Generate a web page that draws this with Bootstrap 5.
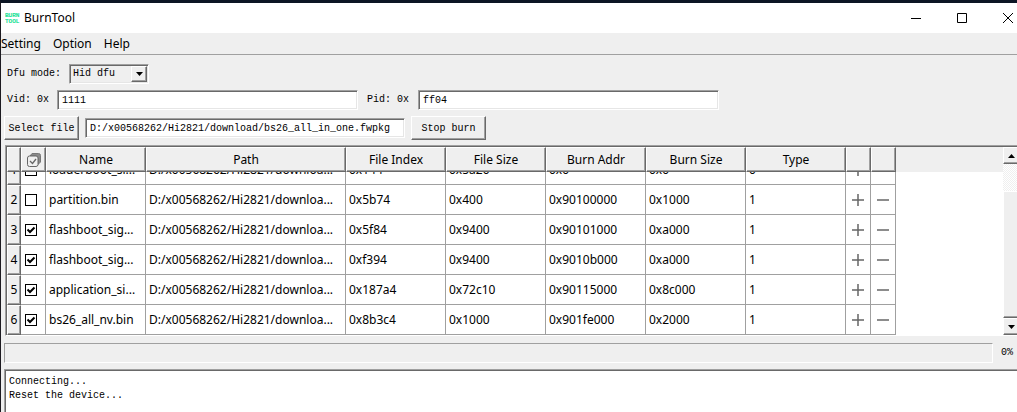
<!DOCTYPE html>
<html lang="en">
<head>
<meta charset="utf-8">
<meta name="viewport" content="width=device-width, initial-scale=1">
<title>BurnTool</title>
<link href="https://cdn.jsdelivr.net/npm/bootstrap@5.3.0/dist/css/bootstrap.min.css" rel="stylesheet">
<style>
:root { --face:#efefef; --mid:#a0a0a0; --dark:#696969; }
body { font:12px/16px "Noto Sans","Open Sans",sans-serif; color:#000; background:var(--face); }
.app { border-top:3px solid #0c1624; border-left:1px solid #1c1a20; }
.titlebar { height:30px; overflow:hidden; }
.win-btn { width:46px; height:30px; flex:none; }
.win-btn:last-child { margin-right:-14px; }
.win-btn, .row-btn { border:0; background:none; padding:0; color:#000; }
.menubar { height:22px; border-bottom:1px solid var(--mid); }
.menubar a { color:#000; text-decoration:none; }
.mono { font-family:"Liberation Mono",monospace; font-size:10px; line-height:14px; }
.sunken { border:1px solid; border-color:var(--mid) #fff #fff var(--mid); box-shadow:inset 1px 1px 0 var(--dark), inset -1px -1px 0 #e6e6e6; background:#fff; border-radius:0; color:#000; }
.raised { border:1px solid; border-color:#fff var(--dark) var(--dark) #fff; box-shadow:inset -1px -1px 0 var(--mid); background:var(--face); border-radius:0; color:#000; }
.tool-form { padding:9px 0 0 3px; gap:6px; }
.form-line { padding-left:3px; }
.file-line { gap:6px; }
.field { height:20px; padding:0 4px; outline:0; }
.field-id { width:301px; }
.field-file { width:320px; }
.pid-label { margin:0 9px; }
.combo { position:relative; width:80px; }
.combo select { display:block; width:100%; height:20px; padding:0 3px; appearance:none; background:var(--face); }
.combo-arrow { position:absolute; right:2px; top:2px; width:16px; height:16px; pointer-events:none; }
.tool-btn { height:24px; width:75px; padding:2px 0 0; }
.panes { padding:5px 0 0 3px; }
.grid-frame { margin-left:1px; border:solid var(--mid); border-width:1px 0 0 1px; box-shadow:inset 1px 1px 0 var(--dark); padding:1px 0 0 1px; background:#fff; border-bottom:1px solid #fff; }
.grid-scroll { height:188px; overflow:hidden; }
.grid { border-collapse:separate; border-spacing:0; table-layout:fixed; width:889px; }
.grid thead { position:sticky; top:0; z-index:1; }
.grid thead tr { background:var(--face); }
.grid thead th { height:25px; padding:0; font-weight:400; text-align:center; }
.grid td { height:30px; padding:0 3px; border:solid var(--mid); border-width:0 1px 1px 0; white-space:nowrap; overflow:hidden; }
.grid tbody th { padding:0; font-weight:400; text-align:center; }
.grid .tick-cell { padding:0 4px; }
.header-fill { box-shadow:inset 0 25px 0 var(--face); }
.tick { appearance:none; display:block; width:12px; height:12px; margin:0; border:1px solid #000; background:#fff; }
.tick:checked { background:#fff url("data:image/svg+xml,%3Csvg xmlns='http://www.w3.org/2000/svg' viewBox='0 0 10 10'%3E%3Cpath d='M1.500 4.500 4 7 8.500 2.500' fill='none' stroke='black' stroke-width='2'/%3E%3C/svg%3E"); }
.row-btn { display:block; width:16px; height:16px; margin:0 auto; }
.row-btn svg, .win-btn svg, .select-all svg, .combo-arrow svg { display:block; margin:auto; }
.vbar { width:14px; background:repeating-conic-gradient(#fff 0 25%, var(--face) 0 50%) 0 0/2px 2px; overflow:hidden; }
.vbar-btn { width:16px; height:17px; padding:0; flex:none; }
.vbar-btn svg { display:block; margin:auto; }
.vbar-gap { height:27px; }
.vbar-thumb { width:16px; }
.progress-line { margin:7px 0 6px; }
.burn-progress { height:20px; border:1px solid; border-color:var(--mid) #fff #fff var(--mid); background:var(--face); border-radius:0; }
.log { display:block; width:100%; height:calc(100vh - 369px); min-height:43px; border:solid var(--mid); border-width:1px 0 0 1px; box-shadow:inset 1px 1px 0 var(--dark); padding:5px 4px; resize:none; outline:0; background:#fff; overflow:hidden; }
</style>
</head>
<body class="overflow-hidden">
<div class="app">
  <header class="titlebar bg-white d-flex align-items-center">
    <svg class="ms-1" width="19" height="16" viewBox="0 0 19 16" aria-hidden="true"><g fill="#00e08a" stroke="#00e08a" stroke-width=".2" font-family="Liberation Mono" font-size="6"><text x="0" y="7">BURN</text><text x="0" y="13">TOOL</text></g></svg>
    <span class="me-auto">BurnTool</span>
    <button class="win-btn" aria-label="Minimize"><svg width="10" height="10"><path d="M0 5.500h10" stroke="#000"/></svg></button>
    <button class="win-btn" aria-label="Maximize"><svg width="10" height="10"><path d="M.5.5h9v9h-9z" stroke="#000" fill="none"/></svg></button>
    <button class="win-btn" aria-label="Close"><svg width="10" height="10"><path d="M0 0l10 10M10 0 0 10" stroke="#000"/></svg></button>
  </header>
  <nav class="menubar d-flex align-items-center gap-2">
    <a href="#">Setting</a><a class="ms-1" href="#">Option</a><a class="ms-1" href="#">Help</a>
  </nav>
  <main>
    <div class="mono tool-form d-flex flex-column">
      <div class="form-line d-flex align-items-center">
        <label class="me-2" for="mode">Dfu mode:</label>
        <div class="combo">
          <select id="mode" class="sunken mono"><option>Hid dfu</option></select>
          <span class="combo-arrow raised d-flex"><svg width="7" height="4"><path d="M0 0h7L3.500 4z"/></svg></span>
        </div>
      </div>
      <div class="form-line d-flex align-items-center">
        <label class="me-2" for="vid">Vid: 0x</label>
        <input id="vid" class="field field-id sunken mono" value="1111">
        <label class="pid-label" for="pid">Pid: 0x</label>
        <input id="pid" class="field field-id sunken mono" value="ff04">
      </div>
      <div class="file-line d-flex align-items-center">
        <button class="tool-btn raised">Select file</button>
        <input class="field field-file sunken mono" aria-label="Firmware file" value="D:/x00568262/Hi2821/download/bs26_all_in_one.fwpkg">
        <button class="tool-btn raised">Stop burn</button>
      </div>
    </div>
    <div class="panes">
      <div class="grid-frame d-flex">
        <div class="grid-scroll header-fill flex-grow-1" id="scroller">
          <table class="grid">
            <colgroup><col style="width:14px"><col style="width:25px"><col style="width:100px"><col style="width:200px"><col style="width:100px"><col style="width:100px"><col style="width:100px"><col style="width:100px"><col style="width:100px"><col style="width:25px"><col style="width:25px"></colgroup>
            <thead><tr>
              <th class="raised"></th>
              <th class="raised select-all"><svg width="14" height="14" viewBox="0 0 14 14" fill="none" stroke="#666"><path d="M3 3 5 .5h6.500q2 0 2 2V9L11 11.500V5L9 3z" fill="#8a8a8a" stroke="#777"/><rect x=".5" y="3" width="10.500" height="10.500" rx="2" fill="#efefef"/><path d="M3 8l2.500 2.500L9 6" stroke-width="1.300"/></svg></th>
              <th class="raised">Name</th><th class="raised">Path</th><th class="raised">File Index</th><th class="raised">File Size</th><th class="raised">Burn Addr</th><th class="raised">Burn Size</th><th class="raised">Type</th><th class="raised"></th><th class="raised"></th>
            </tr></thead>
            <tbody id="rows"></tbody>
          </table>
        </div>
        <div class="vbar d-flex flex-column">
          <button class="vbar-btn raised" aria-label="Scroll up"><svg width="7" height="4"><path d="M0 4h7L3.500 0z"/></svg></button>
          <div class="vbar-gap"></div>
          <div class="vbar-thumb raised flex-grow-1"></div>
          <button class="vbar-btn raised" aria-label="Scroll down"><svg width="7" height="4"><path d="M0 0h7L3.500 4z"/></svg></button>
        </div>
      </div>
      <div class="progress-line d-flex align-items-center mono">
        <div class="burn-progress flex-grow-1" role="progressbar" aria-label="Burn progress" aria-valuenow="0" aria-valuemin="0" aria-valuemax="100"></div>
        <span class="ms-2 me-1">0%</span>
      </div>
      <textarea class="log mono" aria-label="Log" readonly>Connecting...
Reset the device...</textarea>
    </div>
  </main>
</div>
<script src="https://cdn.jsdelivr.net/npm/bootstrap@5.3.0/dist/js/bootstrap.bundle.min.js"></script>
<script>
const path = 'D:/x00568262/Hi2821/downloa...';
const parts = [
  [false, 'loaderboot_si...', '0x144', '0x5a20', '0x0', '0x0', '0'],
  [false, 'partition.bin', '0x5b74', '0x400', '0x90100000', '0x1000', '1'],
  [true, 'flashboot_sig...', '0x5f84', '0x9400', '0x90101000', '0xa000', '1'],
  [true, 'flashboot_sig...', '0xf394', '0x9400', '0x9010b000', '0xa000', '1'],
  [true, 'application_si...', '0x187a4', '0x72c10', '0x90115000', '0x8c000', '1'],
  [true, 'bs26_all_nv.bin', '0x8b3c4', '0x1000', '0x901fe000', '0x2000', '1']
];
const icon = d => `<svg width="12" height="12"><path d="${d}" stroke="#666" stroke-width="1.500"/></svg>`;
document.getElementById('rows').innerHTML = parts.map(([on, name, ...rest], i) => `<tr>
  <th class="raised">${i + 1}</th>
  <td class="tick-cell"><input class="tick" type="checkbox" aria-label="Burn ${name}" ${on ? 'checked' : ''}></td>
  <td>${name}</td><td>${path}</td>${rest.map(v => `<td>${v}</td>`).join('')}
  <td><button class="row-btn" aria-label="Add">${icon('M0 6h12M6 0v12')}</button></td>
  <td><button class="row-btn" aria-label="Remove">${icon('M0 6h12')}</button></td></tr>`).join('');
const scroller = document.getElementById('scroller');
scroller.scrollTop = scroller.scrollHeight;
</script>
</body>
</html>
